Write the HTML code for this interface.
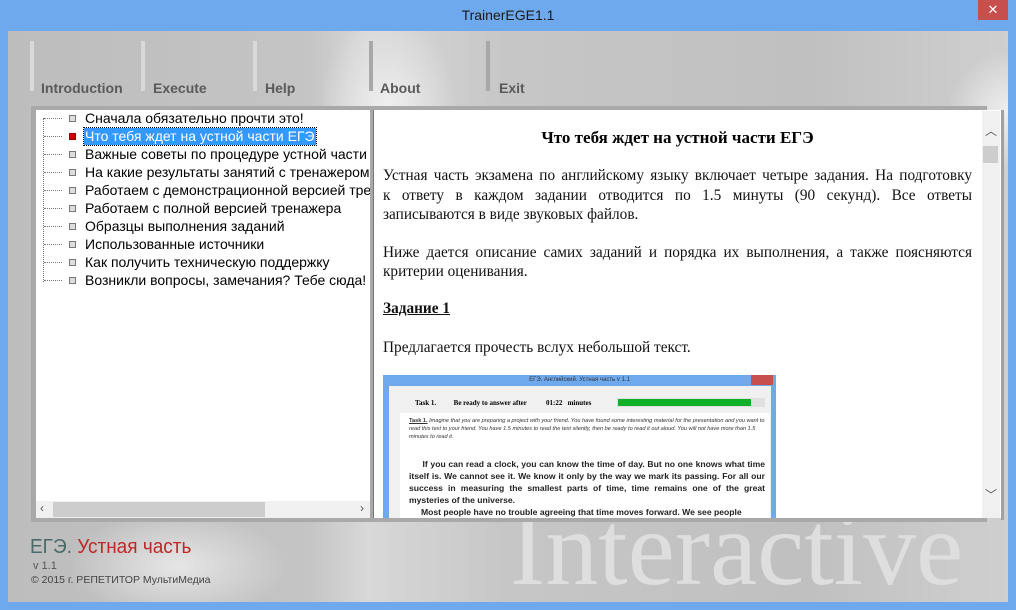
<!DOCTYPE html>
<html><head><meta charset="utf-8"><style>
*{margin:0;padding:0;box-sizing:border-box}
html,body{width:1016px;height:610px;overflow:hidden}
body{background:#6ea9ee;font-family:"Liberation Sans","Noto Sans CJK SC",sans-serif;position:relative}
.a{position:absolute}
.title{left:0;width:1016px;top:7px;text-align:center;font-size:14px;color:#1a1a1a}
.close{left:978px;top:0;width:30px;height:20px;background:#c7504f;color:#fff;font-size:13px;text-align:center;line-height:20px}
.client{left:8px;top:31px;width:1000px;height:571px;background:linear-gradient(90deg,#bdbdbd 0%,#c4c4c4 30%,#d8d8d8 36%,#c6c6c6 50%,#c0c0c0 80%,#cfcfcf 100%);overflow:hidden}
.bar{top:41px;width:4px;height:50px;background:#d9d9d9}
.mi{top:80px;font-size:14px;font-weight:bold;color:#5a5a5a}
.frame{left:31px;top:106px;width:956px;height:416px;background:#a9a9a9}
.left{left:36px;top:110px;width:334px;height:408px;background:#fff}
.tr{left:48px;font-size:14px;color:#000;white-space:nowrap}
.tr i{position:absolute;left:-4px;top:8px;width:18px;border-top:1px dotted #777}
.tr b{position:absolute;left:21px;top:5px;width:7px;height:7px;border:1px solid #777;background:#ddd}
.tr span{position:absolute;left:36px;top:0;padding:0 1px;line-height:17px}
.right{left:373px;top:110px;width:628px;height:408px;background:#fff;border-left:1px solid #777;overflow:hidden}
.p{left:383px;width:589px;font-family:"Liberation Serif","Noto Serif CJK SC",serif;font-size:15.3px;color:#111;text-align:justify;text-align-last:justify;white-space:nowrap}
.pl{text-align-last:left}
</style></head><body>
<div class="a title">TrainerEGE1.1</div>
<div class="a close">✕</div>
<div class="a client">
 <div class="a" style="left:310px;top:-20px;width:140px;height:200px;background:radial-gradient(ellipse,#f0f0f0 0%,rgba(230,230,230,0.6) 40%,rgba(200,200,200,0) 70%)"></div>
 <div class="a" style="left:940px;top:20px;width:120px;height:120px;background:radial-gradient(ellipse,#eee 0%,rgba(220,220,220,0) 70%)"></div>
 <div class="a" style="left:60px;top:480px;width:220px;height:110px;background:radial-gradient(ellipse,#e6e6e6 0%,rgba(220,220,220,0) 70%)"></div>
 <div class="a" style="left:502px;top:465px;font-family:'Liberation Serif',serif;font-size:106px;color:#dedede;white-space:nowrap;line-height:106px">Interactive</div>
</div>
<div class="a bar" style="left:30px"></div><div class="a bar" style="left:141px"></div><div class="a bar" style="left:253px"></div><div class="a bar" style="left:369px;background:#a8a8a8"></div><div class="a bar" style="left:486px;background:#a8a8a8"></div>
<div class="a mi" style="left:41px">Introduction</div>
<div class="a mi" style="left:153px">Execute</div>
<div class="a mi" style="left:265px">Help</div>
<div class="a mi" style="left:380px">About</div>
<div class="a mi" style="left:499px">Exit</div>
<div class="a frame"></div>
<div class="a left"></div>
<div class="a" style="left:43px;top:118px;height:164px;border-left:1px dotted #777"></div>
<div class="a" style="left:36px;top:110px;width:334px;height:391px;overflow:hidden">
<div class="a tr" style="left:12px;top:0px"><i></i><b></b><span>Сначала обязательно прочти это!</span></div>
<div class="a tr" style="left:12px;top:18px"><i></i><b style="background:#d00000;border-color:#900"></b><span style="background:#3399ff;color:#fff;outline:1px dotted #000">Что тебя ждет на устной части ЕГЭ</span></div>
<div class="a tr" style="left:12px;top:36px"><i></i><b></b><span>Важные советы по процедуре устной части</span></div>
<div class="a tr" style="left:12px;top:54px"><i></i><b></b><span>На какие результаты занятий с тренажером</span></div>
<div class="a tr" style="left:12px;top:72px"><i></i><b></b><span>Работаем с демонстрационной версией тренажера</span></div>
<div class="a tr" style="left:12px;top:90px"><i></i><b></b><span>Работаем с полной версией тренажера</span></div>
<div class="a tr" style="left:12px;top:108px"><i></i><b></b><span>Образцы выполнения заданий</span></div>
<div class="a tr" style="left:12px;top:126px"><i></i><b></b><span>Использованные источники</span></div>
<div class="a tr" style="left:12px;top:144px"><i></i><b></b><span>Как получить техническую поддержку</span></div>
<div class="a tr" style="left:12px;top:162px"><i></i><b></b><span>Возникли вопросы, замечания? Тебе сюда!</span></div>
</div>
<div class="a" style="left:36px;top:501px;width:334px;height:17px;background:#f0f0f0"></div>
<div class="a" style="left:53px;top:502px;width:212px;height:15px;background:#cdcdcd"></div>
<div class="a" style="left:40px;top:501px;font-size:12px;color:#555">‹</div>
<div class="a" style="left:360px;top:501px;font-size:12px;color:#555">›</div>
<div class="a right"></div>
<div class="a" style="left:982px;top:111px;width:18px;height:407px;background:#f0f0f0"></div>
<div class="a" style="left:983px;top:146px;width:15px;height:17px;background:#cdcdcd"></div>
<div class="a" style="left:985px;top:122px;font-size:12px;color:#555">︿</div>
<div class="a" style="left:985px;top:486px;font-size:12px;color:#555">﹀</div>
<div class="a" style="left:1001px;top:110px;width:3px;height:410px;background:#a0a0a0"></div>
<div class="a" style="left:373px;top:128px;width:609px;text-align:center;font-family:'Liberation Serif',serif;font-weight:bold;font-size:17px">Что тебя ждет на устной части ЕГЭ</div>
<div class="a p" style="top:167px">Устная часть экзамена по английскому языку включает четыре задания. На подготовку</div>
<div class="a p" style="top:187px">к ответу в каждом задании отводится по 1.5 минуты (90 секунд). Все ответы</div>
<div class="a p pl" style="top:206px">записываются в виде звуковых файлов.</div>
<div class="a p" style="top:244px">Ниже дается описание самих заданий и порядка их выполнения, а также поясняются</div>
<div class="a p pl" style="top:263px">критерии оценивания.</div>
<div class="a p pl" style="top:300px;font-weight:bold;text-decoration:underline">Задание 1</div>
<div class="a p pl" style="top:339px">Предлагается прочесть вслух небольшой текст.</div>
<div class="a" style="left:383px;top:375px;width:393px;height:143px;background:#6ea9ee;overflow:hidden">
 <div class="a" style="left:0;top:0;width:393px;text-align:center;font-size:6px;color:#333;line-height:11px">ЕГЭ. Английский. Устная часть v 1.1</div>
 <div class="a" style="left:368px;top:0;width:22px;height:10px;background:#c7504f"></div>
 <div class="a" style="left:6px;top:11px;width:382px;height:140px;background:#f0f0f0"></div>
 <div class="a" style="left:32px;top:24px;font-family:'Liberation Serif',serif;font-size:7px;font-weight:bold;white-space:nowrap">Task 1. &nbsp;&nbsp;&nbsp;&nbsp;&nbsp;&nbsp;&nbsp;&nbsp;&nbsp;Be ready to answer after &nbsp;&nbsp;&nbsp;&nbsp;&nbsp;&nbsp;&nbsp;&nbsp;&nbsp;&nbsp;01:22 &nbsp;&nbsp;minutes</div>
 <div class="a" style="left:234px;top:23px;width:148px;height:9px;background:#e0e0e0"></div>
 <div class="a" style="left:235px;top:24px;width:133px;height:7px;background:#10b028"></div>
 <div class="a" style="left:17px;top:38px;width:370px;height:110px;background:#fff"></div>
 <div class="a" style="left:26px;top:42px;width:356px;font-size:5.6px;font-style:italic;color:#333;line-height:8px"><b style="text-decoration:underline;font-style:normal">Task 1.</b> Imagine that you are preparing a project with your friend. You have found some interesting material for the presentation and you want to read this text to your friend. You have 1.5 minutes to read the text silently, then be ready to read it out aloud. You will not have more than 1.5 minutes to read it.</div>
 <div class="a" style="left:26px;top:83px;width:356px;font-size:8.6px;font-weight:bold;color:#222;line-height:12px;text-align:justify">&nbsp;&nbsp;&nbsp;&nbsp;&nbsp;If you can read a clock, you can know the time of day. But no one knows what time itself is. We cannot see it. We know it only by the way we mark its passing. For all our success in measuring the smallest parts of time, time remains one of the great mysteries of the universe.<br>&nbsp;&nbsp;&nbsp;&nbsp;&nbsp;Most people have no trouble agreeing that time moves forward. We see people</div>
</div>
<div class="a" style="left:30px;top:536px;font-size:20px;color:#4a6a6a;white-space:nowrap;transform:scaleX(0.95);transform-origin:left">ЕГЭ. <span style="color:#c02828">Устная часть</span></div>
<div class="a" style="left:33px;top:560px;font-size:11px;color:#555">v 1.1</div>
<div class="a" style="left:31px;top:574px;font-size:10.5px;color:#444;white-space:nowrap">© 2015 г. РЕПЕТИТОР МультиМедиа</div>
</body></html>
